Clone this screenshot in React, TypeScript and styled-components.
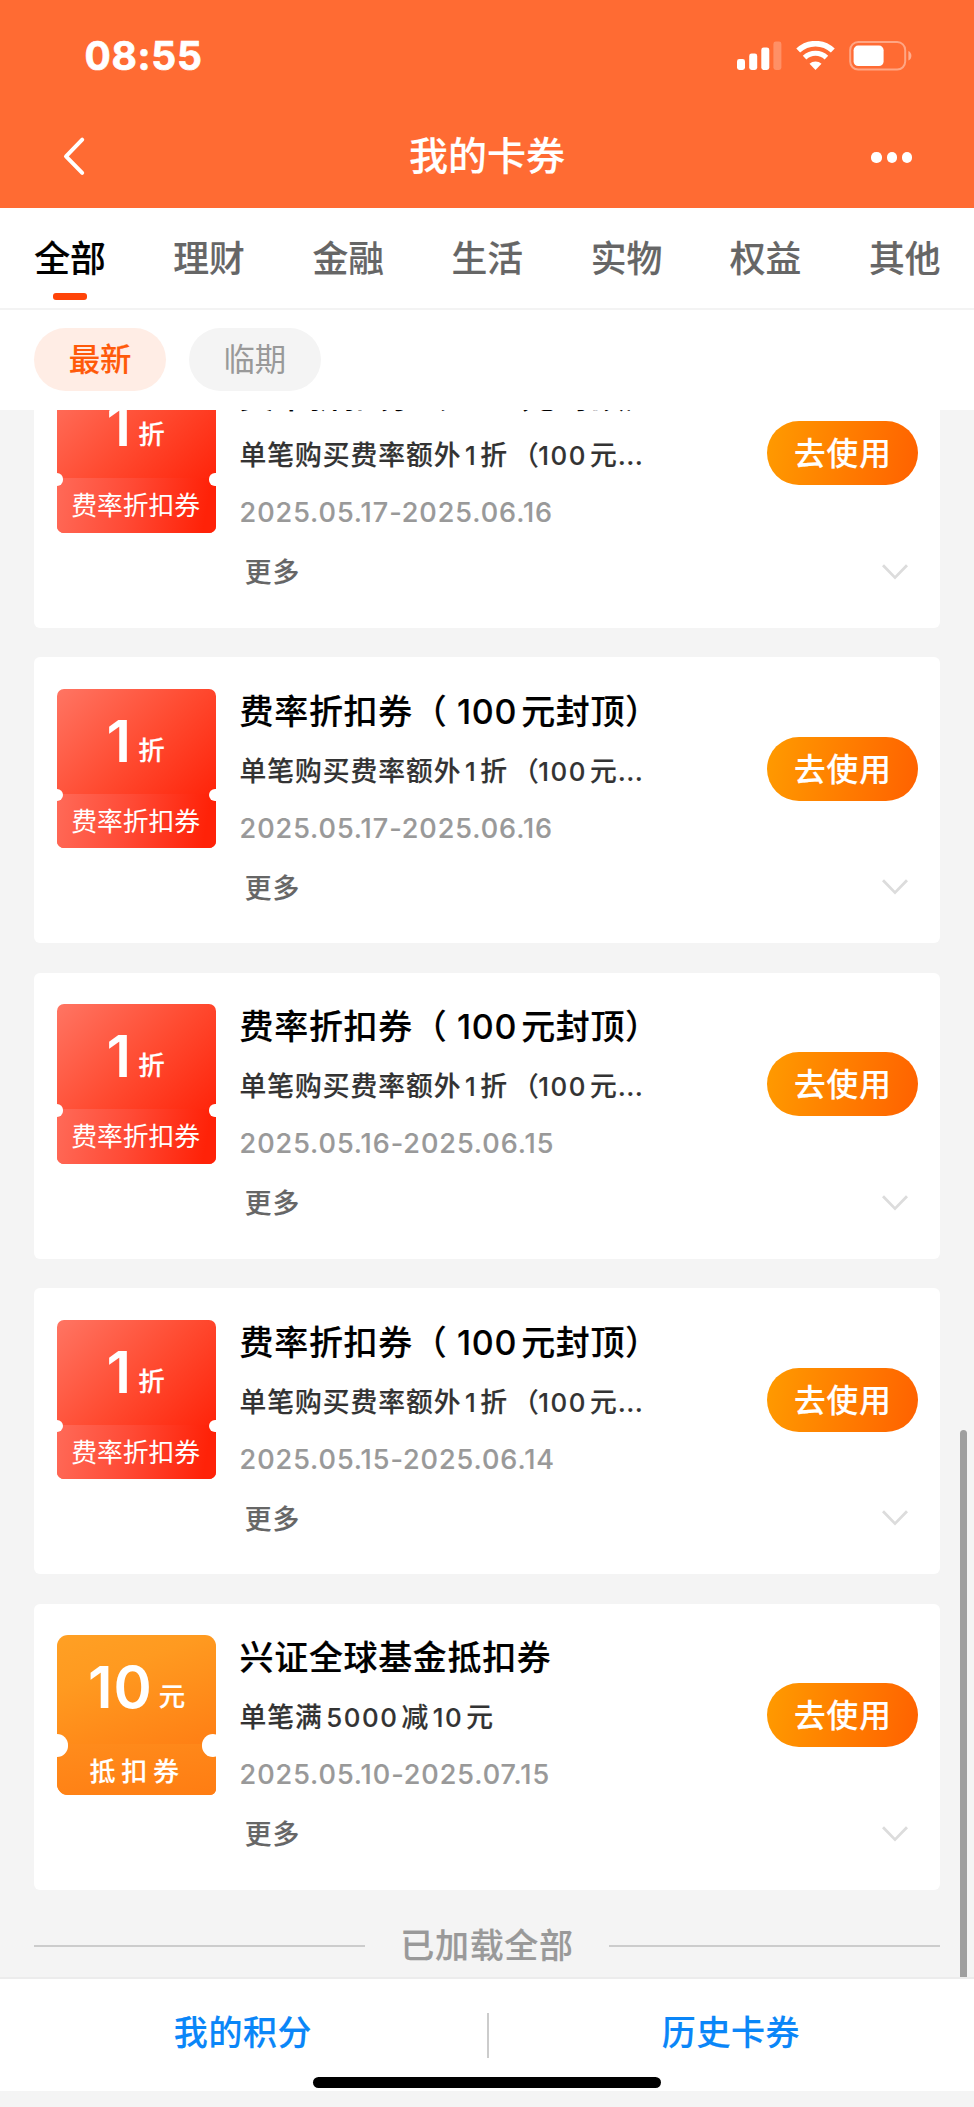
import React, { Fragment } from "react";
import styled, { createGlobalStyle } from "styled-components";

const GlobalStyle = createGlobalStyle`
  *, *::before, *::after { box-sizing: border-box; }
  html, body { margin: 0; padding: 0; background: #f4f4f4; }
  body {
    font-family: Inter, "Noto Sans CJK SC", sans-serif;
    font-weight: 500;
    -webkit-text-stroke: 0.15px currentColor;
  }
  button { font: inherit; border: 0; background: none; padding: 0; margin: 0; }
`;

const Screen = styled.div`
  width: 974px;
  height: 2107px;
  display: flex;
  flex-direction: column;
  overflow: hidden;
  position: relative;
  white-space: nowrap;
`;

const Header = styled.header`
  flex: none;
  height: 207.5px;
  background: #ff6b33;
  color: #fff;
`;

const StatusBar = styled.div`
  height: 111px;
  padding: 0 61px 0 84.5px;
  display: flex;
  align-items: center;
  justify-content: space-between;
`;

const Clock = styled.span`
  font-size: 39px;
  font-weight: 700;
  letter-spacing: 0.7px;
  line-height: 111px;
  -webkit-text-stroke: 0.7px currentColor;
`;

const StatusIcons = styled.div`
  display: flex;
  align-items: center;
  gap: 14px;
`;

const NavBar = styled.div`
  height: 90px;
  padding: 0 62px 0 62px;
  display: grid;
  grid-template-columns: 1fr auto 1fr;
  align-items: center;
`;

const NavTitle = styled.h1`
  margin: 0;
  font-size: 39px;
  font-weight: 500;
  line-height: 90px;
`;

const NavMore = styled.div`
  justify-self: end;
  display: flex;
  gap: 5px;
  padding-top: 3px;
`;

const Dot = styled.i`
  width: 10.2px;
  height: 10.2px;
  border-radius: 50%;
  background: #fff;
`;

const Tabs = styled.nav`
  flex: none;
  height: 102.3px;
  padding: 0 33.4px 0 34.2px;
  background: #fff;
  border-bottom: 2px solid #f3f3f3;
  display: flex;
  justify-content: space-between;
`;

const Tab = styled.button<{ $active?: boolean }>`
  display: flex;
  flex-direction: column;
  align-items: center;
  font-size: 35.8px;
  line-height: 102px;
  height: 100px;
  color: ${(p) => (p.$active ? "#000" : "#666")};

  &::after {
    content: "";
    width: 34px;
    height: 7px;
    margin-top: -17px;
    border-radius: 3px;
    background: ${(p) => (p.$active ? "#ff4408" : "transparent")};
  }
`;

const Filters = styled.div`
  flex: none;
  height: 100px;
  padding: 18px 34.3px 0;
  background: #fff;
  display: flex;
  align-items: flex-start;
  gap: 23.2px;
`;

const Chip = styled.button<{ $active?: boolean }>`
  width: 131.6px;
  height: 63.5px;
  line-height: 65px;
  border-radius: 32px;
  font-size: 31.4px;
  font-weight: ${(p) => (p.$active ? 500 : 400)};
  -webkit-text-stroke-width: ${(p) => (p.$active ? 0.15 : 0)}px;
  color: ${(p) => (p.$active ? "#ff5a0a" : "#999")};
  background: ${(p) => (p.$active ? "#ffede5" : "#f4f4f4")};
`;

const Viewport = styled.main`
  flex: 1;
  min-height: 0;
  overflow: hidden;
  display: flex;
  flex-direction: column;
  justify-content: flex-end;
  padding: 0 34.2px;
`;

const CardList = styled.div`
  display: flex;
  flex-direction: column;
  gap: 29.4px;
`;

const Card = styled.article`
  flex: none;
  height: 286.1px;
  padding: 31.8px 21.4px 0 22.8px;
  border-radius: 6px;
  background: #fff;
  display: flex;
`;

const CouponBox = styled.div<{ $kind: Kind }>`
  flex: none;
  position: relative;
  width: 159.3px;
  height: 159.3px;
  overflow: hidden;
  border-radius: ${(p) => (p.$kind === "rate" ? "7px" : "11px 11px 6px 11px")};
  color: #fff;
  background: ${(p) =>
    p.$kind === "rate"
      ? "linear-gradient(135deg, #ff7563 0%, #ff4a30 45%, #ff1f05 88%)"
      : "linear-gradient(160deg, #ffa024 0%, #ff9a20 25%, #ff7a12 85%)"};
`;

const Notch = styled.i<{ $kind: Kind; $side: "left" | "right" }>`
  position: absolute;
  width: ${(p) => (p.$kind === "rate" ? 12.4 : 22.4)}px;
  height: ${(p) => (p.$kind === "rate" ? 12.4 : 22.4)}px;
  top: ${(p) => (p.$kind === "rate" ? 100 : 99)}px;
  ${(p) => p.$side}: ${(p) => {
    if (p.$kind === "rate") return p.$side === "left" ? -6.2 : -5.2;
    return p.$side === "left" ? -11.4 : -8;
  }}px;
  border-radius: 50%;
  background: #fff;
`;

const Amount = styled.div<{ $kind: Kind }>`
  height: ${(p) => (p.$kind === "rate" ? 104.8 : 109)}px;
  padding-top: 17px;
  padding-right: ${(p) => (p.$kind === "rate" ? 2 : 0)}px;
  display: flex;
  justify-content: center;
  align-items: baseline;
  gap: 6px;
  line-height: 70px;
`;

const Value = styled.b`
  font-size: 58px;
  font-weight: 600;
  letter-spacing: 1px;
  -webkit-text-stroke-width: 0;
`;

const Unit = styled.span`
  font-size: 26.5px;
  transform: translateY(-2px);
`;

const CouponName = styled.div<{ $kind: Kind }>`
  height: 54.5px;
  line-height: 56px;
  padding-right: 2px;
  text-align: center;
  font-size: ${(p) => (p.$kind === "rate" ? 25.8 : 26)}px;
  font-weight: ${(p) => (p.$kind === "rate" ? 400 : 500)};
  -webkit-text-stroke-width: ${(p) => (p.$kind === "rate" ? 0 : 0.15)}px;
  letter-spacing: ${(p) => (p.$kind === "rate" ? 0 : 5.8)}px;
  text-indent: ${(p) => (p.$kind === "rate" ? 0 : 3)}px;
  background: ${(p) =>
    p.$kind === "rate"
      ? "linear-gradient(100deg, #ff6a58 0%, #ff4a35 45%, #ff2208 92%)"
      : "linear-gradient(170deg, #ff8c1c, #ff7c12)"};
`;

const Info = styled.div`
  flex: 1;
  min-width: 0;
  margin-left: 23.3px;
`;

const Title = styled.h2`
  margin: 0;
  padding-top: 1px;
  height: 45px;
  line-height: 44px;
  font-size: 34px;
  font-weight: 500;
  letter-spacing: 0.65px;
  word-spacing: -4.5px;
  color: #000;
`;

const Description = styled.p`
  margin: 15px 0 0;
  height: 44px;
  line-height: 45px;
  font-size: 26.8px;
  letter-spacing: 0.95px;
  color: #333;
`;

const Num = styled.span`
  margin: 0 0.12em 0 0.13em;

  ${Description} & {
    font-size: 25.8px;
    letter-spacing: 1.6px;
  }
`;

const OpenParen = styled.span`
  ${Description} & {
    margin: 0 -5px 0 4px;
  }
`;

const Ellipsis = styled.span`
  letter-spacing: 0.3px;
`;

const Dates = styled.p`
  margin: 14px 0 0;
  height: 44px;
  line-height: 44px;
  font-size: 27px;
  letter-spacing: 0.95px;
  color: #999;
`;

const MoreRow = styled.div`
  margin-top: 14.5px;
  padding: 0 9.5px 0 5.1px;
  height: 44px;
  display: flex;
  justify-content: space-between;
  align-items: center;
  color: #666;
`;

const MoreText = styled.span`
  padding-top: 2px;
  line-height: 45px;
  font-size: 26.8px;
  letter-spacing: 0.95px;
`;

const InfoTop = styled.div`
  display: flex;
  justify-content: space-between;
`;

const UseButton = styled.button`
  flex: none;
  width: 151px;
  height: 64px;
  margin-top: 48px;
  border-radius: 32px;
  line-height: 65px;
  font-size: 31.6px;
  font-weight: 500;
  letter-spacing: 1px;
  color: #fff;
  background: linear-gradient(100deg, #ff9800 5%, #ff6400 95%);
`;

const EndOfList = styled.div`
  flex: none;
  height: 87.4px;
  padding-top: 26px;
  display: flex;
  align-items: center;
  font-size: 34px;
  letter-spacing: 0.7px;
  color: #999;
`;

const Rule = styled.i`
  flex: 1;
  height: 2px;
  background: #ccc;
`;

const EndText = styled.span`
  padding: 0 35.2px;
  line-height: 44px;
`;

const ScrollThumb = styled.div`
  position: absolute;
  left: 960px;
  top: 1430px;
  width: 7px;
  height: 547px;
  border-radius: 4px 4px 0 0;
  background: #9f9f9f;
`;

const BottomBar = styled.footer`
  flex: none;
  height: 113.5px;
  border-top: 2px solid #ececec;
  background: #fff;
  display: flex;
`;

const BottomLink = styled.a`
  flex: 1;
  text-align: center;
  line-height: 108px;
  font-size: 34px;
  letter-spacing: 0.6px;
  color: #0a86f8;
`;

const Divider = styled.i`
  width: 2px;
  height: 45px;
  margin: 34px -1px 0 1px;
  background: #ccc;
`;

const SafeArea = styled.div`
  flex: none;
  height: 16.5px;
`;

const HomeIndicator = styled.div`
  position: absolute;
  left: 313.4px;
  top: 2077px;
  width: 348px;
  height: 11.4px;
  border-radius: 6px;
  background: #000;
`;

type Kind = "rate" | "cash";

interface Coupon {
  kind: Kind;
  value: string;
  unit: string;
  name: string;
  title: string;
  description: string;
  dates: string;
}

const rateCoupon = (dates: string): Coupon => ({
  kind: "rate",
  value: "1",
  unit: "折",
  name: "费率折扣券",
  title: "费率折扣券（ 100元封顶）",
  description: "单笔购买费率额外1折（100元...",
  dates,
});

const coupons: Coupon[] = [
  rateCoupon("2025.05.17-2025.06.16"),
  rateCoupon("2025.05.17-2025.06.16"),
  rateCoupon("2025.05.16-2025.06.15"),
  rateCoupon("2025.05.15-2025.06.14"),
  {
    kind: "cash",
    value: "10",
    unit: "元",
    name: "抵扣券",
    title: "兴证全球基金抵扣券",
    description: "单笔满5000减10元",
    dates: "2025.05.10-2025.07.15",
  },
];

const tabs = ["全部", "理财", "金融", "生活", "实物", "权益", "其他"];

/* Adds a thin space around digits and tightens a bracket that opens right before them. */
const Spaced = ({ text }: { text: string }) => (
  <>
    {text.split(/(\d+|（(?=\d)|\.{3})/).map((part, i) => {
      if (i % 2 === 0) return <Fragment key={i}>{part}</Fragment>;
      if (part === "（") return <OpenParen key={i}>{part}</OpenParen>;
      if (part === "...") return <Ellipsis key={i}>{part}</Ellipsis>;
      return <Num key={i}>{part}</Num>;
    })}
  </>
);

const Signal = () => (
  <svg width="45" height="30" viewBox="0 0 45 30" fill="#fff">
    <rect x="0" y="18" width="8" height="11" rx="2.4" />
    <rect x="12.2" y="12.6" width="8" height="16.4" rx="2.4" />
    <rect x="24.3" y="6.6" width="8" height="22.4" rx="2.4" />
    <rect x="36.4" y="0.6" width="8" height="28.4" rx="2.4" opacity=".25" />
  </svg>
);

const Wifi = () => (
  <svg width="39" height="30" viewBox="0 0 39 30" fill="none" stroke="#fff">
    <path d="M2.2 9.6a25 25 0 0 1 34.6 0" strokeWidth="5.6" />
    <path d="M8.6 16.6a15.8 15.8 0 0 1 21.8 0" strokeWidth="5.2" />
    <path d="M19.5 29l-6-6.2a8.8 8.8 0 0 1 12 0z" fill="#fff" stroke="none" />
  </svg>
);

const Battery = () => (
  <svg width="64" height="32" viewBox="0 0 64 32">
    <rect x="1.2" y="2" width="55" height="27.6" rx="8" fill="none" stroke="#fff" strokeOpacity=".4" strokeWidth="2" />
    <rect x="4.6" y="5.6" width="30" height="20.4" rx="4.6" fill="#fff" />
    <path d="M59.4 11c4 1.6 4 8 0 9.6z" fill="#fff" opacity=".45" />
  </svg>
);

const BackIcon = () => (
  <svg width="24" height="40" viewBox="0 0 24 40" fill="none" stroke="#fff" strokeWidth="4" strokeLinecap="round" strokeLinejoin="round">
    <path d="M20.2 3.6L4 20.4l16.2 16.4" />
  </svg>
);

const ChevronDown = () => (
  <svg width="28" height="18" viewBox="0 0 28 18" fill="none" stroke="#dcdcdc" strokeWidth="2.8">
    <path d="M2 2.2l12 12.4L26 2.2" />
  </svg>
);

const CouponCard = ({ coupon }: { coupon: Coupon }) => (
  <Card>
    <CouponBox $kind={coupon.kind}>
      <Amount $kind={coupon.kind}>
        <Value>{coupon.value}</Value>
        <Unit>{coupon.unit}</Unit>
      </Amount>
      <CouponName $kind={coupon.kind}>{coupon.name}</CouponName>
      <Notch $kind={coupon.kind} $side="left" />
      <Notch $kind={coupon.kind} $side="right" />
    </CouponBox>
    <Info>
      <InfoTop>
        <div>
          <Title>
            <Spaced text={coupon.title} />
          </Title>
          <Description>
            <Spaced text={coupon.description} />
          </Description>
          <Dates>{coupon.dates}</Dates>
        </div>
        <UseButton>去使用</UseButton>
      </InfoTop>
      <MoreRow>
        <MoreText>更多</MoreText>
        <ChevronDown />
      </MoreRow>
    </Info>
  </Card>
);

export default function App() {
  return (
    <Screen>
      <GlobalStyle />
      <Header>
        <StatusBar>
          <Clock>08:55</Clock>
          <StatusIcons>
            <Signal />
            <Wifi />
            <Battery />
          </StatusIcons>
        </StatusBar>
        <NavBar>
          <BackIcon />
          <NavTitle>我的卡券</NavTitle>
          <NavMore>
            <Dot />
            <Dot />
            <Dot />
          </NavMore>
        </NavBar>
      </Header>
      <Tabs>
        {tabs.map((name, i) => (
          <Tab key={name} $active={i === 0}>
            {name}
          </Tab>
        ))}
      </Tabs>
      <Filters>
        <Chip $active>最新</Chip>
        <Chip>临期</Chip>
      </Filters>
      <Viewport>
        <CardList>
          {coupons.map((coupon, i) => (
            <CouponCard key={i} coupon={coupon} />
          ))}
        </CardList>
        <EndOfList>
          <Rule />
          <EndText>已加载全部</EndText>
          <Rule />
        </EndOfList>
      </Viewport>
      <BottomBar>
        <BottomLink>我的积分</BottomLink>
        <Divider />
        <BottomLink>历史卡券</BottomLink>
      </BottomBar>
      <SafeArea />
      <ScrollThumb />
      <HomeIndicator />
    </Screen>
  );
}
